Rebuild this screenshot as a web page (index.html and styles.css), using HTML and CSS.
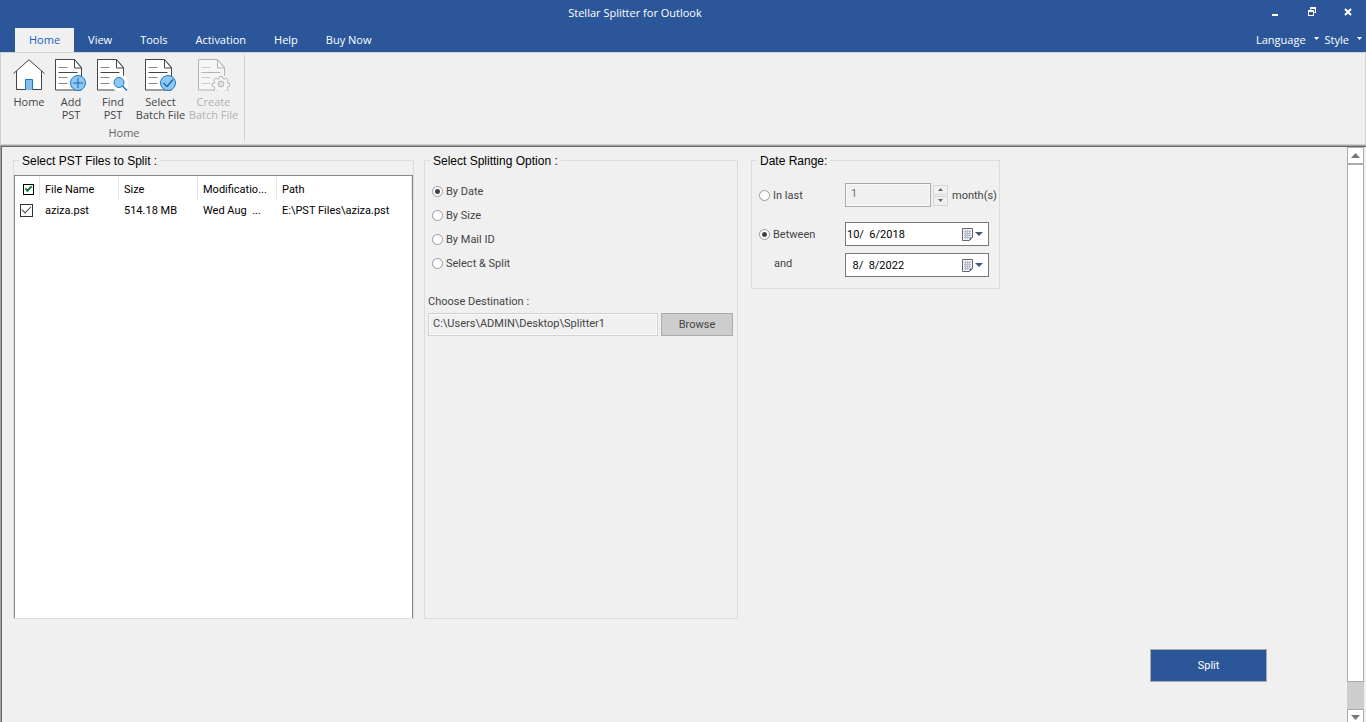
FILE: index.html
```
<!DOCTYPE html>
<html lang="en">
    <head>
        <meta charset="utf-8">
        <title>Stellar Splitter for Outlook</title>
        <link rel="stylesheet" href="styles.css">
    </head>
    <body>
        <header class="titlebar">
            <h1 class="title">Stellar Splitter for Outlook</h1>
            <div class="window-buttons">
                <button aria-label="Minimize"><svg width="10" height="10"><path d="M1 8h6" stroke="#fff" stroke-width="2"/></svg></button>
                <button aria-label="Restore"><svg width="10" height="10" shape-rendering="crispEdges"><path d="M3.5 3V1.5h5v4H7M1.5 4.5h5v4h-5zM3 1.5h6M1 4.5h6" fill="none" stroke="#fff"/><path d="M3 1h6M1 4h6" stroke="#fff" stroke-width="2"/></svg></button>
                <button aria-label="Close"><svg width="10" height="10"><path d="M2 2l6 6M8 2l-6 6" stroke="#fff" stroke-width="2"/></svg></button>
            </div>
        </header>
        <nav class="tabs">
            <a href="#" class="tab active">Home</a>
            <a href="#" class="tab">View</a>
            <a href="#" class="tab">Tools</a>
            <a href="#" class="tab">Activation</a>
            <a href="#" class="tab">Help</a>
            <a href="#" class="tab">Buy Now</a>
            <div class="tab-menus">
                <button class="menu-button">Language <svg width="5" height="3"><path d="M0 0h5L2.500 3z" fill="#fff"/></svg></button>
                <button class="menu-button">Style <svg width="5" height="3"><path d="M0 0h5L2.500 3z" fill="#fff"/></svg></button>
            </div>
        </nav>
        <section class="ribbon">
            <div class="ribbon-group">
                <div class="ribbon-tools">
                    <button class="tool">
                        <svg width="32" height="32" viewBox="0 0 32 32">
                            <path d="M3.500 12.500L16 1l12.500 11.500v18h-25z" fill="#fff"/>
                            <path d="M.5 14.500L16 .8l15.500 13.700M3.500 12v18.500h25V12" fill="none" stroke="#444"/>
                            <path d="M12.500 31V20.500h7V31" fill="#83beec" stroke="#1979ca"/>
                        </svg>
                        Home
                    </button>
                    <button class="tool">
                        <svg width="32" height="32" viewBox="0 0 32 32">
                            <use href="#doc"/>
                            <circle cx="23" cy="24" r="7.500" fill="#8fc7f0" stroke="#1979ca"/>
                            <path d="M18 24h10M23 19v10" stroke="#1267b0"/>
                        </svg>
                        Add<br>PST
                    </button>
                    <button class="tool">
                        <svg width="32" height="32" viewBox="0 0 32 32">
                            <use href="#doc"/>
                            <circle cx="23" cy="24.500" r="8.500" fill="#fff"/>
                            <circle cx="22" cy="23.500" r="5" fill="#8fc7f0" stroke="#1979ca"/>
                            <path d="M25.500 27l4.500 4.500" stroke="#1979ca" stroke-width="1.500"/>
                        </svg>
                        Find<br>PST
                    </button>
                    <button class="tool wide">
                        <svg width="32" height="32" viewBox="0 0 32 32">
                            <use href="#doc"/>
                            <circle cx="23" cy="24" r="7.500" fill="#8fc7f0" stroke="#1979ca"/>
                            <path d="M18.500 24l3.500 3.500 6-7" fill="none" stroke="#1267b0" stroke-width="1.300"/>
                        </svg>
                        Select<br>Batch File
                    </button>
                    <button class="tool wide" disabled>
                        <svg width="32" height="32" viewBox="0 0 32 32">
                            <g id="doc">
                                <path class="doc-page" d="M.5.5h19l7 8v22.500h-26z"/>
                                <path class="doc-fold" d="M19.500.5v8.500h7z"/>
                                <path class="doc-line soft" d="M3.500 8.500h9M3.500 18.500h9M3.500 24.500h9"/>
                                <path class="doc-line" d="M3.500 13.500h19"/>
                            </g>
                            <path class="fade" d="M0 0h28v32H0z"/>
                            <circle cx="23" cy="24.500" r="8.500" fill="#f0f0f0"/>
                            <path d="M21.600 17.500h2.800l.5 2 1.600.7 1.800-1.100 1.900 1.900-1.100 1.800.7 1.600 2 .1v2.600l-2 .6-.7 1.500 1.100 1.800-1.900 1.900-1.800-1.100-1.600.7-.5 1.500h-2.800l-.5-1.500-1.600-.7-1.800 1.100-1.900-1.900 1.100-1.800-.7-1.500-2-.6v-2.600l2-.1.700-1.600-1.100-1.800 1.900-1.900 1.800 1.100 1.600-.7z" fill="#f6f6f6" stroke="#b4b4b4"/>
                            <circle cx="23" cy="25" r="3" fill="#ddd" stroke="#b4b4b4"/>
                        </svg>
                        Create<br>Batch File
                    </button>
                </div>
                <div class="group-name">Home</div>
            </div>
        </section>
        <div class="workspace">
            <main class="content">
                <div class="panels">
                    <fieldset class="panel files">
                        <legend>Select PST Files to Split :</legend>
                        <div class="file-list">
                            <table>
                                <colgroup>
                                    <col class="col-check"><col class="col-text"><col class="col-text"><col class="col-text"><col>
                                </colgroup>
                                <thead>
                                    <tr>
                                        <th><input type="checkbox" class="check check-all" aria-label="Select all files" checked></th>
                                        <th>File Name</th>
                                        <th>Size</th>
                                        <th>Modificatio...</th>
                                        <th>Path</th>
                                    </tr>
                                </thead>
                                <tbody>
                                    <tr>
                                        <td><input type="checkbox" class="check" aria-label="Select aziza.pst" checked></td>
                                        <td>aziza.pst</td>
                                        <td>514.18 MB</td>
                                        <td>Wed Aug &nbsp;...</td>
                                        <td>E:\PST Files\aziza.pst</td>
                                    </tr>
                                </tbody>
                            </table>
                        </div>
                    </fieldset>

                    <fieldset class="panel">
                        <legend>Select Splitting Option :</legend>
                        <div class="options">
                            <label><input type="radio" name="option" checked>By Date</label>
                            <label><input type="radio" name="option">By Size</label>
                            <label><input type="radio" name="option">By Mail ID</label>
                            <label><input type="radio" name="option">Select &amp; Split</label>
                        </div>
                        <div class="destination">
                            <label for="path">Choose Destination :</label>
                            <div class="destination-row">
                                <input type="text" id="path" value="C:\Users\ADMIN\Desktop\Splitter1" readonly>
                                <button class="browse">Browse</button>
                            </div>
                        </div>
                    </fieldset>

                    <fieldset class="panel range">
                        <legend>Date Range:</legend>
                        <div class="range-grid">
                            <label><input type="radio" name="range">In last</label>
                            <div class="months">
                                <input type="text" id="months" value="1" disabled>
                                <div class="spinner">
                                    <button aria-label="More" disabled><svg width="5" height="3"><path d="M0 3h5L2.500 0z" fill="#666"/></svg></button>
                                    <button aria-label="Less" disabled><svg width="5" height="3"><path d="M0 0h5L2.500 3z" fill="#666"/></svg></button>
                                </div>
                                <label for="months">month(s)</label>
                            </div>
                            <label><input type="radio" name="range" checked>Between</label>
                            <div class="date-box">
                                <input type="text" aria-label="From date" value="10/  6/2018">
                                <button aria-label="Pick from date">
                                    <svg width="22" height="13" viewBox="0 0 22 13">
                                        <g id="cal">
                                            <path d="M.5.5h10v9l-3 3h-7z" fill="#eef1f5" stroke="#6b6470"/>
                                            <path d="M2 3.500h7M2 5.500h7M2 7.500h7M2 9.500h5M3.500 2v9M5.500 2v9M7.500 2v7" stroke="#b4bdc9"/>
                                            <path d="M7.500 12.500v-3h3z" fill="#6b6470"/>
                                            <path d="M13 4h8l-4 4z" fill="#40587c"/>
                                        </g>
                                    </svg>
                                </button>
                            </div>
                            <label for="to" class="and">and</label>
                            <div class="date-box">
                                <input type="text" id="to" value="  8/  8/2022">
                                <button aria-label="Pick to date"><svg width="22" height="13" viewBox="0 0 22 13"><use href="#cal"/></svg></button>
                            </div>
                        </div>
                    </fieldset>
                </div>
                <div class="actions">
                    <button class="split">Split</button>
                </div>
            </main>
            <div class="scrollbar">
                <button class="scroll-button" aria-label="Scroll up"><svg width="9" height="5"><path d="M0 5h9L4.500 0z" fill="#777"/></svg></button>
                <div class="thumb"></div>
                <button class="scroll-button scroll-down" aria-label="Scroll down"><svg width="9" height="5"><path d="M0 0h9L4.500 5z" fill="#777"/></svg></button>
            </div>
        </div>
    </body>
</html>
```
FILE: styles.css
```
* {
    box-sizing: border-box;
}
body {
    margin: 0;
    height: 100vh;
    display: flex;
    flex-direction: column;
    overflow: hidden;
    font-family: "Open Sans", "Noto Sans", sans-serif;
    font-size: 11px;
    color: #444;
    background-color: #f0f0f0;
    white-space: nowrap;
}
button, input {
    font: inherit;
    color: inherit;
    margin: 0;
    padding: 0;
}
button {
    border: none;
    background: none;
}
svg {
    display: block;
}

/* title bar and tabs */
.titlebar {
    display: grid;
    grid-template-columns: 1fr auto 1fr;
    align-items: center;
    height: 28px;
    padding: 0 13px 4px;
    background-color: #2b579a;
    color: white;
}
.title {
    grid-column: 2;
    margin: 0 96px 0 0;
    font-size: 11px;
    font-weight: normal;
}
.window-buttons {
    display: flex;
    justify-content: flex-end;
    gap: 26px;
}
.tabs {
    display: flex;
    height: 24px;
    padding-left: 15px;
    background-color: #2b579a;
    line-height: 24px;
}
.tab {
    padding: 0 14px;
    color: white;
    text-decoration: none;
}
.tab.active {
    background-color: #f0f0f0;
    color: #1d5fc4;
}
.tab-menus {
    display: flex;
    margin-left: auto;
    padding-right: 4px;
    gap: 6px;
}
.menu-button {
    display: flex;
    align-items: center;
    gap: 8px;
    color: white;
}
.menu-button svg {
    margin-bottom: 4px;
}

/* ribbon */
.ribbon {
    display: flex;
    height: 93px;
    padding: 2px 0 3px 7px;
    border: 1px solid #d0d0d0;
}
.ribbon-group {
    display: flex;
    flex-direction: column;
    padding-right: 4px;
    border-right: 1px solid #d0d0d0;
}
.ribbon-tools {
    display: flex;
    flex: 1;
    align-items: flex-start;
}
.tool {
    display: flex;
    flex-direction: column;
    align-items: center;
    width: 42px;
    padding-top: 4px;
    line-height: 13px;
}
.tool.wide {
    width: 53px;
}
.tool svg {
    margin-bottom: 4px;
}
.tool:disabled {
    color: #b1b1b1;
}
.doc-page, .doc-fold {
    fill: #fff;
    stroke: #444;
}
.doc-line {
    stroke: #444;
}
.doc-line.soft {
    stroke: #888;
}
.fade {
    fill: #f0f0f0;
    opacity: 0.65;
}
.group-name {
    text-align: center;
    line-height: 16px;
    color: #666;
}

/* work area */
.workspace {
    display: flex;
    flex: 1;
    min-height: 0;
    padding: 1px 2px 0 1px;
    border: solid #a0a0a0;
    border-width: 1px 0 0 1px;
    box-shadow: inset 1px 1px #696969;
    font-family: Tahoma, Roboto, sans-serif;
}
.content {
    display: flex;
    flex: 1;
    flex-direction: column;
    padding: 5px 11px 40px;
}
.panels {
    display: grid;
    flex: 1;
    grid-template-columns: 401fr 314fr 252fr 326fr;
    gap: 10px;
}
.panel {
    display: flex;
    flex-direction: column;
    min-width: 0;
    margin: 0;
    padding: 0 4px 0 3px;
    border: 1px solid #dcdcdc;
}
.panel legend {
    margin-left: 2px;
    padding: 2px 3px 0;
    font-family: "Liberation Sans", Arial, sans-serif;
    font-size: 12px;
    line-height: 14px;
    color: black;
}
.panel.files {
    padding: 0;
}
.files legend {
    margin-left: 5px;
}
.file-list {
    height: 100%;
    margin-top: 7px;
    border: 1px solid #828790;
    border-bottom: none;
    background-color: white;
    color: black;
}
table {
    width: 100%;
    table-layout: fixed;
    border-collapse: separate;
    border-spacing: 0;
}
.col-check {
    width: 25px;
}
.col-text {
    width: 79px;
}
th, td {
    padding: 0 0 0 5px;
    font-weight: normal;
    text-align: left;
}
th {
    height: 24px;
    padding-top: 2px;
    border-right: 1px solid #e5e5e5;
}
td {
    height: 20px;
}
th:first-child {
    padding-left: 8px;
}
.check {
    appearance: none;
    display: grid;
    place-items: center;
    width: 13px;
    height: 13px;
    border: 1px solid #333;
    background-color: white;
}
.check::before {
    content: "";
    width: 8px;
    height: 4px;
    margin-bottom: 3px;
    border: solid #444;
    border-width: 0 0 1px 1px;
    transform: rotate(-45deg);
}
.check-all {
    width: 11px;
    height: 11px;
    border-color: black;
}
.check-all::before {
    width: 5px;
    height: 2px;
    margin-bottom: 2px;
    border-color: #107c41;
    border-width: 0 0 2px 2px;
}

/* options */
input[type="radio"] {
    appearance: none;
    width: 11px;
    height: 11px;
    border: 1px solid #999;
    border-radius: 50%;
    background-color: white;
}
input[type="radio"]:checked {
    background-image: radial-gradient(circle, #444 2px, white 3px);
}
.options {
    display: flex;
    flex-direction: column;
    padding: 11px 0 0 4px;
}
.options label, .range-grid label {
    display: flex;
    align-items: center;
    gap: 3px;
    height: 24px;
}
.destination {
    margin-top: 20px;
}
.destination label {
    display: block;
    line-height: 14px;
    margin-bottom: 4px;
}
.destination-row {
    display: flex;
    gap: 3px;
}
.destination-row input {
    flex: 1;
    min-width: 0;
    height: 23px;
    padding: 0 4px 2px;
    border: 1px solid #d0d0d0;
    outline: 1px solid #fafafa;
    outline-offset: -2px;
    background-color: #f0f0f0;
}
.browse {
    width: 72px;
    border: 1px solid #ababab;
    background-color: #cdcdcd;
}

/* date range */
.panel.range {
    align-self: start;
    margin-left: 3px;
    padding: 0 2px 11px 7px;
}
.range legend {
    margin-left: -2px;
}
.range-grid {
    display: grid;
    grid-template-columns: 86px 1fr;
    row-gap: 7px;
    padding-top: 15px;
}
.range-grid .and {
    padding-left: 15px;
    height: 20px;
}
.months {
    display: flex;
    align-items: center;
    margin-bottom: 8px;
}
.months input {
    width: 86px;
    height: 24px;
    padding: 0 5px 3px;
    border: 1px solid #ababab;
    outline: 1px solid #fafafa;
    outline-offset: -2px;
    background-color: #f0f0f0;
    color: #777;
}
.spinner {
    display: flex;
    flex-direction: column;
    gap: 1px;
    margin: 0 4px 0 2px;
}
.spinner button {
    display: flex;
    align-items: center;
    justify-content: center;
    width: 15px;
    height: 10px;
    border: 1px solid #d5d5d5;
}
.date-box {
    display: flex;
    align-items: center;
    width: 144px;
    height: 24px;
    padding: 0 4px 0 1px;
    border: 1px solid #777;
    background-color: white;
    color: black;
}
.date-box input {
    flex: 1;
    min-width: 0;
    border: none;
    background: none;
}

.actions {
    display: flex;
    justify-content: flex-end;
    margin-top: 30px;
    padding-right: 69px;
}
.split {
    width: 117px;
    height: 33px;
    border: 1px solid #ababab;
    background-color: #2b579a;
    color: white;
}

/* scrollbar */
.scrollbar {
    display: flex;
    flex-direction: column;
    width: 17px;
    background-color: #cdcdcd;
}
.scroll-button {
    display: flex;
    align-items: center;
    justify-content: center;
    height: 17px;
    border: 1px solid #ababab;
    background-color: white;
}
.scroll-down {
    margin: auto 0 -4px;
}
.thumb {
    height: 90%;
    border: 1px solid #ababab;
    background-color: white;
}
```
